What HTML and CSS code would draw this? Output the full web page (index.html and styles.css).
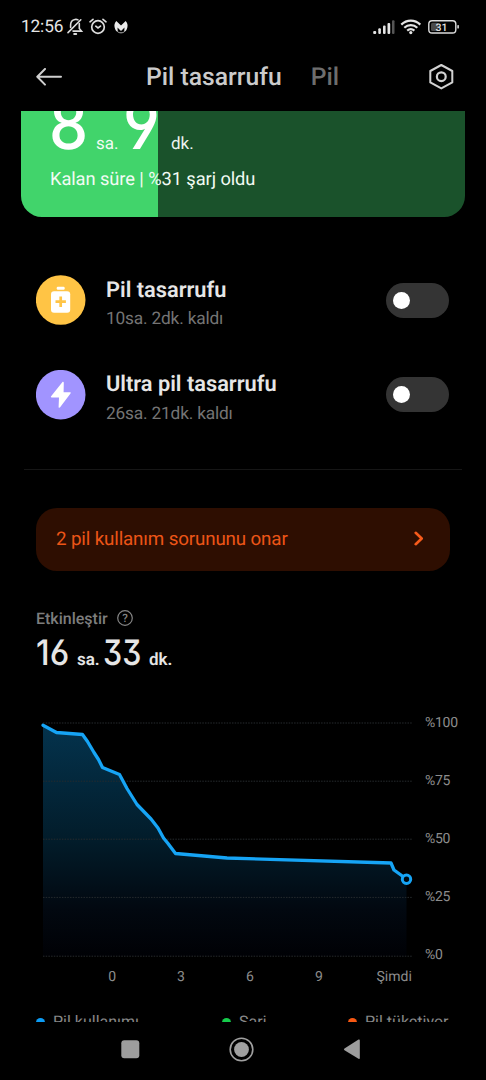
FILE: index.html
```html
<!DOCTYPE html>
<html lang="tr">
<head>
<meta charset="utf-8">
<title>Pil tasarrufu</title>
<link rel="stylesheet" href="styles.css">
</head>
<body>
<div class="phone">
  <div class="statusbar">
    <span class="clock">12:56</span>
    <svg class="status-left" width="64" height="20" viewBox="66 16 64 20" fill="none" stroke="#dcdcdc" stroke-width="1.6" stroke-linecap="round">
      <path d="M68 31.6L80.8 18.800"/>
      <path d="M70.6 26.500V24c0-3 1.700-5 4.400-5.500 1.200-.2 2.200 0 3 .4M79.300 22.500V27.500l2.200 2.600H73"/>
      <path d="M74.200 33h2" stroke-width="2"/>
      <circle cx="98" cy="26" r="6.300" stroke-width="1.700"/>
      <path d="M95.800 25.200l2.200 1.700 2.500-1.800M90 20.800l3-2.400M106 20.800l-3-2.400" stroke-width="1.700"/>
      <path d="M116.300 20L121 24.600l4.700-4.600c1.700 1.700 2.200 4 1.700 6.300-.4 2.200-1.500 4-3.200 5l.3-4.800-3.500 3.600-3.500-3.600.3 4.800c-1.700-1-2.800-2.800-3.200-5-.5-2.300 0-4.600 1.700-6.300z" fill="#ececec" stroke="none"/>
      <path d="M118.500 31.300c1.700.8 3.300.8 5 0" stroke-width=".8"/>
    </svg>
    <svg class="status-right" width="88" height="20" viewBox="372 16 88 20">
      <g fill="#e4e4e4"><rect x="373.200" y="30" width="3" height="3" rx="1"/><rect x="378.300" y="27.300" width="2.600" height="5.700" rx="1"/><rect x="383" y="24.500" width="2.600" height="8.500" rx="1"/><rect x="387.500" y="22" width="2.700" height="11" rx="1"/></g>
      <rect x="392" y="19.300" width="2.500" height="13.700" rx="1" fill="#555"/>
      <g fill="none" stroke="#e4e4e4" stroke-width="2.200"><path d="M401.300 23.600c5.500-5.300 13.500-5.300 19 0"/><path d="M404.300 26.700c3.700-3.500 9.300-3.500 13 0"/><path d="M407.200 29.600c2.200-1.900 5-1.900 7.200 0"/></g>
      <circle cx="410.800" cy="31.600" r="1.600" fill="#e4e4e4"/>
      <rect x="428.800" y="19.700" width="27" height="12.300" rx="3.300" fill="none" stroke="#dcdcdc" stroke-width="1.400"/>
      <rect x="431" y="21.800" width="7.500" height="8.200" rx="1.500" fill="#4a4a4a"/>
      <rect x="457.300" y="24" width="1.600" height="3.600" rx=".7" fill="#dcdcdc"/>
      <text class="battery-text" x="441.500" y="29.700">31</text>
    </svg>
  </div>

  <div class="header">
    <svg class="back" width="26" height="18" viewBox="0 0 26 18" fill="none" stroke="#cfcfcf" stroke-width="2" stroke-linecap="round" stroke-linejoin="round"><path d="M25 8.800H1.500M9 1L1.300 8.800 9 16.600"/></svg>
    <span class="tab tab-active">Pil tasarrufu</span>
    <span class="tab">Pil</span>
    <svg class="settings" width="26" height="26" viewBox="0 0 26 26" fill="none" stroke="#d2d2d2" stroke-width="2" stroke-linejoin="round"><path d="M13.300 1L24.300 7V18.400L13.300 24.400 2.300 18.400V7z"/><circle cx="13.300" cy="12.700" r="4.400" stroke-width="2.200"/></svg>
  </div>

  <main class="content">
    <section class="card">
      <div class="remaining"><span class="num">8</span><span class="unit unit-h">sa.</span><span class="num">9</span><span class="unit unit-m">dk.</span></div>
      <div class="remaining-note">Kalan süre | %31 şarj oldu</div>
    </section>

    <section class="modes">
      <div class="mode">
        <svg width="50" height="50" viewBox="0 0 50 50"><circle cx="24.700" cy="25" r="24.800" fill="#ffc445"/><rect x="20.700" y="11.700" width="8" height="3" rx="1.200" fill="#fff"/><rect x="15" y="16.200" width="19.200" height="21.600" rx="3" fill="#fff"/><path d="M24.700 21.500v10.400M19.500 26.700h10.400" stroke="#ffc445" stroke-width="2.700"/></svg>
        <div class="mode-text"><div class="mode-title">Pil tasarrufu</div><div class="mode-sub">10sa. 2dk. kaldı</div></div>
        <div class="switch"><div class="knob"></div></div>
      </div>
      <div class="mode">
        <svg width="50" height="50" viewBox="0 0 50 50"><circle cx="24.700" cy="24.700" r="24.800" fill="#a194ff"/><path d="M26.300 12.200L15.100 26.200c-.5.700-.2 1.200.5 1.200h7.400l-.4 9.500c0 1 .9 1.200 1.500.4L34.500 23.400c.5-.7.200-1.200-.6-1.200h-6.300l.2-9.500c0-1-.9-1.200-1.500-.5z" fill="#fff"/></svg>
        <div class="mode-text"><div class="mode-title">Ultra pil tasarrufu</div><div class="mode-sub">26sa. 21dk. kaldı</div></div>
        <div class="switch"><div class="knob"></div></div>
      </div>
    </section>

    <div class="banner"><span>2 pil kullanım sorununu onar</span>
      <svg width="10" height="16" viewBox="0 0 10 16" fill="none" stroke="#f75b1b" stroke-width="2.600" stroke-linecap="round" stroke-linejoin="round"><path d="M1.700 1.800L7.700 7.500l-6 5.700"/></svg>
    </div>

    <div class="active-label"><span>Etkinleştir</span>
      <svg width="18" height="18" viewBox="0 0 18 18"><circle cx="9" cy="9" r="7.300" fill="none" stroke="#858585" stroke-width="1.200"/><text class="help" x="9" y="13">?</text></svg>
    </div>
    <div class="active-time"><span class="num num-16">16</span><span class="unit unit-h">sa.</span><span class="num">33</span><span class="unit unit-m">dk.</span></div>

    <svg class="chart" width="486" height="290" viewBox="0 700 486 290">
      <defs><linearGradient id="area" x1="0" y1="725" x2="0" y2="956" gradientUnits="userSpaceOnUse"><stop offset="0" stop-color="#04334d"/><stop offset=".5" stop-color="#021c2a"/><stop offset=".8" stop-color="#020810"/><stop offset="1" stop-color="#000105"/></linearGradient></defs>
      <path d="M43 725.200L56.500 732.500 82.500 734.500 87.500 741.500 94 752.500 98.500 759.500 102.500 767.500 119.500 774.500 127 788.500 137 804.500 151 819 158 828 163.500 838 168 843.500 175.500 853.500 227 858 391 863 394 870 406.500 879V956H43z" fill="url(#area)"/>
      <g class="grid"><path d="M43 723H412M43 781.200H412M43 839.200H412M43 897.400H412M43 956.200H412"/></g>
      <path d="M43 725.200L56.500 732.500 82.500 734.500 87.500 741.500 94 752.500 98.500 759.500 102.500 767.500 119.500 774.500 127 788.500 137 804.500 151 819 158 828 163.500 838 168 843.500 175.500 853.500 227 858 391 863 394 870 406.500 879" fill="none" stroke="#16a4f5" stroke-width="3.300" stroke-linecap="round" stroke-linejoin="round"/>
      <circle cx="406.500" cy="879.300" r="4.200" fill="#00070d" stroke="#16a4f5" stroke-width="3"/>
      <g class="axis"><text x="425" y="727">%100</text><text x="425" y="785">%75</text><text x="425" y="843">%50</text><text x="425" y="901">%25</text><text x="425" y="959">%0</text></g>
      <g class="axis axis-x"><text x="112.200" y="981">0</text><text x="181" y="981">3</text><text x="250" y="981">6</text><text x="319" y="981">9</text><text x="394.200" y="981">Şimdi</text></g>
    </svg>

    <div class="legend">
      <div class="legend-item"><i class="dot blue"></i>Pil kullanımı</div>
      <div class="legend-item"><i class="dot green"></i>Şarj</div>
      <div class="legend-item"><i class="dot orange"></i>Pil tüketiyor</div>
    </div>
  </main>

  <nav class="navbar">
    <svg width="486" height="58" viewBox="0 1022 486 58"><rect x="121.300" y="1040.300" width="18" height="18" rx="3" fill="#9d9d9d"/><circle cx="241.500" cy="1049.500" r="11.300" fill="none" stroke="#a0a0a0" stroke-width="1.600"/><circle cx="241.500" cy="1049.500" r="7.400" fill="#a0a0a0"/><path d="M344.500 1048.500L358.500 1039.600q1.300-.7 1.300.8V1058q0 1.500-1.300.8L344.500 1050.200q-1.300-.85 0-1.700z" fill="#9d9d9d"/></svg>
  </nav>
</div>
</body>
</html>
```
FILE: styles.css
```css
* { box-sizing: border-box; }
body { margin: 0; background: #000; }
svg { display: block; flex: none; }
.phone { width: 486px; height: 1080px; overflow: hidden; display: flex; flex-direction: column; background: #000; color: #e6e6e6; font-family: Roboto, "Liberation Sans", sans-serif; white-space: nowrap; text-rendering: geometricPrecision; }
.statusbar { height: 51px; padding: 2px 26px 0 21px; display: flex; align-items: center; }
.clock { width: 45px; font-size: 17.300px; letter-spacing: -.15px; }
.status-right { margin-left: auto; }
.battery-text { font: 500 10.500px Roboto, sans-serif; fill: #e4e4e4; text-anchor: middle; }
.header { height: 60px; padding: 0 32px 8px 36px; display: flex; align-items: center; }
.tab { padding-top: 1px; font-size: 24.700px; font-weight: 500; color: #6d6d6d; }
.tab-active { margin: 0 29px 0 84px; color: #cbcbcb; }
.settings { margin-left: auto; }
.content { height: 911px; overflow: hidden; }

.card { height: 106px; margin: 0 21px; padding-left: 29px; overflow: hidden; border-radius: 0 0 21px 21px; background: linear-gradient(90deg, #41d46b 137.500px, #1a522b 137.500px); color: #fff; }
.num { font-family: Inter, Lato, sans-serif; font-feature-settings: "ss01", "cv03", "cv04", "cv09"; transform: scaleX(.87); transform-origin: 0 50%; }
.remaining { height: 60px; margin-top: -17.500px; display: flex; align-items: baseline; line-height: 60px; }
.remaining .num { width: 40px; margin-left: -1px; font-size: 69px; font-weight: 550; transform: scaleX(.9); }
.remaining .unit { font-size: 17px; opacity: .93; }
.remaining .unit-h { margin: 0 4px 0 7px; width: 24px; }
.remaining .unit-m { margin-left: 8px; }
.remaining-note { margin-top: 15.500px; font-size: 18.300px; letter-spacing: -.08px; line-height: 22px; color: #f2fbf4; }

.modes { height: 253px; margin: 0 24px; padding: 36px 13px 0 12px; border-bottom: 1px solid #161616; }
.mode { height: 94.500px; display: flex; align-items: center; }
.mode-text { margin-left: 20px; padding-top: 8px; flex: 1; }
.mode-title { font-size: 21.800px; font-weight: 600; line-height: 28px; }
.mode-sub { margin-top: 1.500px; font-size: 17.300px; letter-spacing: -.18px; line-height: 26px; color: #747474; }
.switch { width: 63px; height: 35px; padding: 9px 7px; border-radius: 18px; background: #343434; }
.knob { width: 17px; height: 17px; border-radius: 50%; background: #fff; }

.banner { height: 63px; margin: 37.500px 36px 0; padding: 0 26px 0 20px; display: flex; align-items: center; justify-content: space-between; border-radius: 21px; background: #2e0e01; color: #ec5517; font-size: 18.800px; letter-spacing: -.15px; }
.active-label { height: 24px; margin: 35.500px 36px 0; display: flex; align-items: center; gap: 8px; font-size: 16px; font-weight: 500; color: #7d7d7d; }
.help { font: 500 11.500px Roboto, sans-serif; fill: #858585; text-anchor: middle; }
.active-time { height: 46px; margin: 0 36px; display: flex; align-items: baseline; line-height: 47px; }
.active-time .num { font-size: 35px; font-weight: 550; width: 37px; margin-left: -1px; margin-right: 1px; }
.active-time .num-16 { margin-left: 0; margin-right: 0; transform: scaleX(.94); }
.active-time .unit { font-size: 17px; font-weight: 600; }
.active-time .unit-h { width: 27px; margin-left: 4px; }
.active-time .unit-m { margin-left: 8px; }
.chart { margin-top: 24px; }
.grid { stroke: #262b2e; stroke-width: 1; stroke-dasharray: 1.500 1.200; }
.axis { font-size: 14px; letter-spacing: -.25px; fill: #8c8c8c; }
.axis-x { text-anchor: middle; letter-spacing: 0; }
.legend { display: grid; grid-template-columns: 186px 126px 1fr; margin: 21px 0 0 36px; font-size: 16px; line-height: 22px; color: #888; }
.legend-item { display: flex; align-items: center; gap: 8px; }
.dot { width: 9px; height: 9px; border-radius: 50%; }
.blue { background: #0c9cf5; }
.green { background: #15cc4b; }
.orange { background: #f75813; }
```
